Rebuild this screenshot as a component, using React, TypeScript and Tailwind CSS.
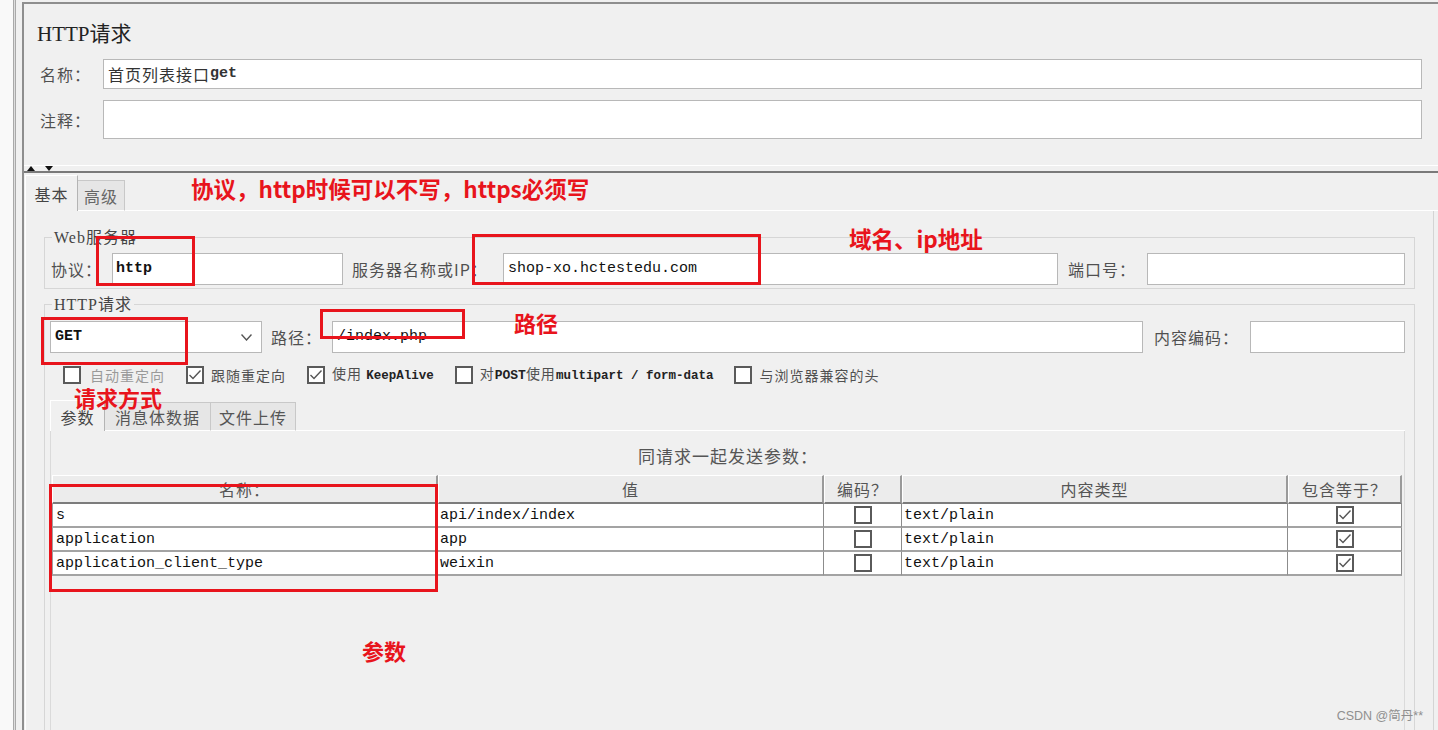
import React from 'react';

const MONO = "font-['Liberation_Mono','Noto_Sans_CJK_SC',monospace]";
const RED = "absolute font-['Noto_Sans_CJK_SC',sans-serif] font-bold leading-[20px] text-[#e8141c] whitespace-nowrap";

function Box({ checked }: { checked?: boolean }) {
  return (
    <div className="w-[18px] h-[18px] border-2 border-[#5a5a5a] bg-white flex items-center justify-center shrink-0">
      {checked ? (
        <svg width="14" height="14" viewBox="0 0 14 14">
          <polyline points="1.5,7 5,10.5 12.5,2.5" fill="none" stroke="#555" strokeWidth="1.4" />
        </svg>
      ) : null}
    </div>
  );
}

const rows = [
  ['s', 'api/index/index'],
  ['application', 'app'],
  ['application_client_type', 'weixin'],
];

export default function App() {
  return (
    <div className="relative w-[1438px] h-[730px] overflow-hidden bg-[#f0f0f0] flex font-['Noto_Sans_CJK_SC',sans-serif] text-[#505050]">
      {/* left strip */}
      <div className="w-[13px] h-full bg-[#f9f9f9]" />
      <div className="w-[3px] h-full border-l border-r border-[#a9a9a9] bg-[#dedede]" />
      <div className="w-[6px] h-full bg-[#f0f0f0]" />

      <div className="flex-1 flex flex-col pt-[2px] min-w-0">
        <div className="flex-1 flex flex-col border-t-2 border-l-2 border-[#8e8e8e] min-h-0">
          {/* top section */}
          <div className="h-[161px] shrink-0 flex flex-col pt-[17px] pl-[13px] pr-[16px]">
            <div className="h-[26px] leading-[26px] text-[21px] text-[#222] font-['Liberation_Serif','Noto_Sans_CJK_SC',serif]">
              HTTP请求
            </div>
            <div className="mt-[12px] flex items-center pl-[3px]">
              <div className="w-[63px] text-[16px] tracking-[1px]">名称：</div>
              <div className="flex-1 h-[30px] bg-white border border-[#b8b8b8] flex items-center pl-[4px] text-[16px] tracking-[1px] text-[#333]">
                首页列表接口<span className={`${MONO} text-[15px] font-bold tracking-normal`}>get</span>
              </div>
            </div>
            <div className="mt-[11px] flex items-center pl-[3px]">
              <div className="w-[63px] text-[16px] tracking-[1px]">注释：</div>
              <div className="flex-1 h-[39px] bg-white border border-[#b8b8b8]" />
            </div>
          </div>

          {/* divider with arrows */}
          <div className="h-[8px] shrink-0 border-t border-t-white border-b-2 border-b-[#7a7a7a] flex items-center pl-[3px] gap-[10px]">
            <svg width="8" height="5" viewBox="0 0 8 5">
              <polygon points="0,5 4,0 8,5" fill="#111" />
            </svg>
            <svg width="8" height="5" viewBox="0 0 8 5">
              <polygon points="0,0 8,0 4,5" fill="#111" />
            </svg>
          </div>

          {/* tabs */}
          <div className="h-[38px] shrink-0 flex items-end pl-[1px]">
            <div className="w-[53px] h-[36px] border-t border-l border-white border-r border-r-[#b4b4b4] flex items-center justify-center text-[16px] tracking-[1px] text-[#444]">
              基本
            </div>
            <div className="w-[47px] h-[31px] bg-[#e6e6e6] border-t border-r border-[#c8c8c8] border-b border-b-white flex items-center justify-center text-[16px] tracking-[1px] text-[#666]">
              高级
            </div>
            <div className="flex-1 h-px bg-white" />
          </div>

          {/* content panel */}
          <div className="flex-1 ml-[1px] mr-[4px] border-l border-l-white border-r border-r-[#d4d4d4] pl-[18px] pr-[18px] pt-[17px] flex flex-col min-h-0">
            {/* Web server fieldset */}
            <fieldset className="border border-[#d6d6d6] pb-[3px]">
              <legend className="ml-[7px] px-[2px] text-[16px] leading-[16px] tracking-[1px] text-[#444]">
                <span className="font-['Liberation_Serif',serif] tracking-[1px]">Web</span>服务器
              </legend>
              <div className="pt-[7px] pl-[6px] pr-[9px] flex items-center h-[39px]">
                <div className="w-[61px] text-[16px] tracking-[1px]">协议：</div>
                <div className={`w-[231px] h-[32px] bg-white border border-[#b8b8b8] flex items-center pl-[3px] ${MONO} text-[15px] font-bold text-[#111]`}>
                  http
                </div>
                <div className="ml-[9px] w-[151px] text-[16px] tracking-[1px] whitespace-nowrap">服务器名称或IP：</div>
                <div className={`flex-1 h-[32px] bg-white border border-[#b8b8b8] flex items-center pl-[4px] ${MONO} text-[15px] text-[#111]`}>
                  shop-xo.hctestedu.com
                </div>
                <div className="ml-[10px] w-[79px] text-[16px] tracking-[1px]">端口号：</div>
                <div className="w-[258px] h-[32px] bg-white border border-[#b8b8b8]" />
              </div>
            </fieldset>

            {/* HTTP request fieldset */}
            <fieldset className="mt-[6px] border border-[#d6d6d6] h-[520px] shrink-0">
              <legend className="ml-[7px] px-[2px] text-[16px] leading-[16px] tracking-[1px] text-[#444]">
                <span className="font-['Liberation_Serif',serif]">HTTP</span>请求
              </legend>
              <div className="pt-[8px] pl-[5px] pr-[9px] flex flex-col">
                {/* method row */}
                <div className="flex items-center h-[32px]">
                  <div className="w-[212px] h-[32px] bg-white border border-[#b8b8b8] flex items-center justify-between pl-[4px] pr-[9px]">
                    <span className={`${MONO} text-[15px] font-bold text-[#111]`}>GET</span>
                    <svg width="11" height="7" viewBox="0 0 11 7">
                      <polyline points="0.5,0.5 5.5,6 10.5,0.5" fill="none" stroke="#555" strokeWidth="1.4" />
                    </svg>
                  </div>
                  <div className="ml-[9px] w-[61px] text-[16px] tracking-[1px]">路径：</div>
                  <div className={`flex-1 h-[32px] bg-white border border-[#b8b8b8] flex items-center pl-[4px] ${MONO} text-[15px] text-[#111]`}>
                    /index.php
                  </div>
                  <div className="ml-[11px] w-[96px] text-[16px] tracking-[1px] whitespace-nowrap">内容编码：</div>
                  <div className="w-[155px] h-[32px] bg-white border border-[#b8b8b8]" />
                </div>

                {/* checkbox row */}
                <div className="mt-[12px] h-[19px] pl-[13px] flex items-center gap-[21px] text-[14px] leading-[18px] tracking-[1px] whitespace-nowrap">
                  <div className="flex items-center">
                    <Box />
                    <span className="ml-[9px] text-[#9a9a9a]">自动重定向</span>
                  </div>
                  <div className="flex items-center">
                    <Box checked />
                    <span className="ml-[7px]">跟随重定向</span>
                  </div>
                  <div className="flex items-center">
                    <Box checked />
                    <span className="ml-[7px]">使用 <span className={`${MONO} text-[12.5px] font-bold tracking-normal text-[#222]`}>KeepAlive</span></span>
                  </div>
                  <div className="flex items-center">
                    <Box />
                    <span className="ml-[7px]">对<span className={`${MONO} text-[13px] font-bold tracking-normal text-[#222]`}>POST</span>使用<span className={`${MONO} text-[12.5px] font-bold tracking-normal text-[#222]`}>multipart / form-data</span></span>
                  </div>
                  <div className="flex items-center">
                    <Box />
                    <span className="ml-[7px]">与浏览器兼容的头</span>
                  </div>
                </div>

                {/* sub tabs */}
                <div className="mt-[16px] h-[31px] flex items-end">
                  <div className="w-[55px] h-[31px] pt-[2px] border-t border-l border-white border-r border-r-[#b4b4b4] flex items-center justify-center text-[16px] leading-[18px] tracking-[1px] text-[#444]">
                    参数
                  </div>
                  <div className="w-[106px] h-[29px] bg-[#e6e6e6] border-t border-r border-[#c8c8c8] border-b border-b-white flex items-center justify-center text-[16px] leading-[18px] tracking-[1px] text-[#555]">
                    消息体数据
                  </div>
                  <div className="w-[85px] h-[29px] bg-[#e6e6e6] border-t border-r border-[#c8c8c8] border-b border-b-white flex items-center justify-center text-[16px] leading-[18px] tracking-[1px] text-[#555]">
                    文件上传
                  </div>
                  <div className="flex-1 h-px bg-white" />
                </div>

                {/* params panel */}
                <div className="h-[400px] border-l border-[#dadada] border-r border-r-[#dadada] pt-[14px] pl-[1px] flex flex-col">
                  <div className="h-[22px] leading-[22px] text-center text-[17px] tracking-[1px] text-[#555]">
                    同请求一起发送参数：
                  </div>
                  <div className="mt-[8px] grid grid-cols-[386px_386px_78px_386px_114px]">
                    {['名称：', '值', '编码？', '内容类型', '包含等于？'].map((h) => (
                      <div
                        key={h}
                        className="h-[29px] bg-[#ececec] border-t border-t-white border-l border-l-white border-r-2 border-r-[#9a9a9a] border-b-2 border-b-[#7c7c7c] flex items-center justify-center text-[16px] tracking-[1px] text-[#555]"
                      >
                        {h}
                      </div>
                    ))}
                    {rows.map(([a, b]) => (
                      <React.Fragment key={a}>
                        <div className={`h-[24px] bg-white border-l border-l-[#a0a0a0] border-r border-r-[#8c8c8c] border-b-2 border-b-[#a3a3a3] flex items-center pl-[3px] pt-[3px] ${MONO} text-[15px] text-[#111]`}>
                          {a}
                        </div>
                        <div className={`h-[24px] bg-white border-r border-r-[#8c8c8c] border-b-2 border-b-[#a3a3a3] flex items-center pl-[2px] pt-[3px] ${MONO} text-[15px] text-[#111]`}>
                          {b}
                        </div>
                        <div className="h-[24px] bg-white border-r border-r-[#8c8c8c] border-b-2 border-b-[#a3a3a3] flex items-center justify-center">
                          <Box />
                        </div>
                        <div className={`h-[24px] bg-white border-r border-r-[#8c8c8c] border-b-2 border-b-[#a3a3a3] flex items-center pl-[2px] pt-[3px] ${MONO} text-[15px] text-[#111]`}>
                          text/plain
                        </div>
                        <div className="h-[24px] bg-white border-r border-r-[#8c8c8c] border-b-2 border-b-[#a3a3a3] flex items-center justify-center">
                          <Box checked />
                        </div>
                      </React.Fragment>
                    ))}
                  </div>
                </div>
              </div>
            </fieldset>
          </div>
        </div>
      </div>

      {/* annotation boxes */}
      <div className="absolute left-[96px] top-[236px] w-[99px] h-[50px] border-[3px] border-[#e8141c]" />
      <div className="absolute left-[472px] top-[234px] w-[289px] h-[51px] border-[3px] border-[#e8141c]" />
      <div className="absolute left-[320px] top-[309px] w-[145px] h-[30px] border-[3px] border-[#e8141c]" />
      <div className="absolute left-[41px] top-[317px] w-[147px] h-[48px] border-[3px] border-[#e8141c]" />
      <div className="absolute left-[49px] top-[484px] w-[389px] h-[108px] border-[3px] border-[#e8141c]" />

      {/* annotation texts */}
      <div className={`${RED} left-[191px] top-[178px] text-[22.5px]`}>协议，http时候可以不写，https必须写</div>
      <div className={`${RED} left-[849px] top-[228px] text-[22.5px]`}>域名、ip地址</div>
      <div className={`${RED} left-[514px] top-[312px] text-[22px]`}>路径</div>
      <div className={`${RED} left-[74px] top-[387px] text-[22px]`}>请求方式</div>
      <div className={`${RED} left-[362px] top-[640px] text-[22px]`}>参数</div>

      {/* watermark */}
      <div className="absolute right-[15px] bottom-[8px] text-[12.5px] leading-none text-[#8f8f8f] font-['Liberation_Sans','Noto_Sans_CJK_SC',sans-serif]">
        CSDN @简丹**
      </div>
    </div>
  );
}
